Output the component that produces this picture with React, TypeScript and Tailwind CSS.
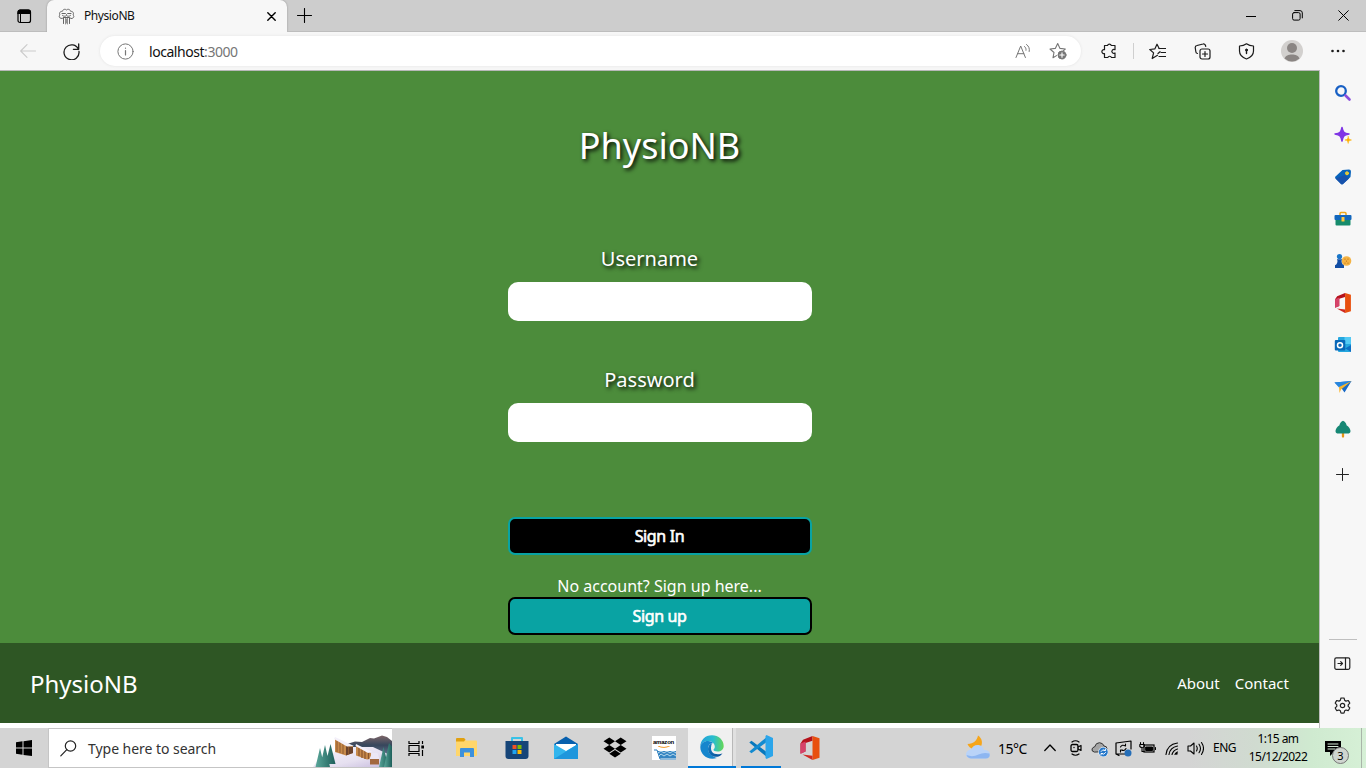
import React from "react";

type IconProps = { children: React.ReactNode; size?: number; className?: string; box?: string };

function Icon({ children, size = 16, className = "", box }: IconProps) {
  return (
    <svg
      width={size}
      height={size}
      viewBox={box ?? `0 0 ${size} ${size}`}
      fill="none"
      stroke="currentColor"
      strokeLinecap="round"
      strokeLinejoin="round"
      className={`shrink-0 ${className}`}
    >
      {children}
    </svg>
  );
}

function Cell({ className, children }: { className: string; children?: React.ReactNode }) {
  return <div className={`flex shrink-0 items-center justify-center ${className}`}>{children}</div>;
}

function TabStrip() {
  return (
    <div className="flex h-8 shrink-0 bg-[#cdcdcd]">
      <Cell className="w-[47px] border-b border-[#bdbdbd]">
        <Icon size={16} className="text-black">
          <rect x="2" y="2" width="12.5" height="12.5" rx="2" strokeWidth="1.2" />
          <path d="M2 4a2 2 0 0 1 2-2h8.500a2 2 0 0 1 2 2v1.500H2z" fill="currentColor" />
          <path d="M4.500 5.500v8.500" strokeWidth="1" />
        </Icon>
      </Cell>
      <div className="flex w-[240px] items-center rounded-t-[7px] bg-[#f7f7f7] pl-[11px] shadow-[0_0_2px_#8d8d8d]">
        <Icon size={17} className="text-[#666]">
          <path d="M4 10.500C1 10.500.5 8 2 7C.5 4.500 3 3 4.200 3.500C5 1 7.500.8 8.500 2C9.500.8 12 1 12.800 3.500C14 3 16.500 4.500 15 7C16.500 8 16 10.500 13 10.500L11.500 9.500h-6z" />
          <path d="M4 5.500h3.500l1 1l1-1H13M4.500 7.500c1 1 3 1 4 0c1 1 3 1 4 0M5.500 10v5.500M11.500 10v5.500" />
          <path d="M7.500 10v6M9.500 10v6M8.500 11v4" strokeWidth=".7" />
        </Icon>
        <span className="ml-[9px] w-[183px] text-[12px] tracking-[-0.42px] text-[#111]">PhysioNB</span>
        <Icon size={9} className="text-black">
          <path d="M.8.800l7.400 7.400M8.200.800L.8 8.200" strokeWidth="1.4" />
        </Icon>
      </div>
      <Cell className="w-[35px] border-b border-[#bdbdbd]">
        <Icon size={15} className="text-black">
          <path d="M7.500.500v14M.5 7.500h14" strokeWidth="1.1" />
        </Icon>
      </Cell>
      <div className="flex flex-1 justify-end border-b border-[#bdbdbd] text-black">
        <Cell className="w-[46px]">
          <Icon size={10}>
            <path d="M0 5.500h10" strokeLinecap="butt" />
          </Icon>
        </Cell>
        <Cell className="w-[46px]">
          <Icon size={11}>
            <rect x=".6" y="2.600" width="7.500" height="7.500" rx="1.500" />
            <path d="M2.800.600h5.200a2.300 2.300 0 0 1 2.300 2.300v5" />
          </Icon>
        </Cell>
        <Cell className="w-[46px]">
          <Icon size={11}>
            <path d="M.7.700l9.600 9.600M10.300.700L.7 10.300" />
          </Icon>
        </Cell>
      </div>
    </div>
  );
}

function Toolbar() {
  return (
    <div className="flex h-[38px] shrink-0 items-center bg-[#f7f7f7] text-[#1b1b1b]">
      <Cell className="w-14">
        <Icon size={16} className="text-[#cbcbcb]">
          <path d="M15.500 8H.8M7 1.700L.7 8L7 14.300" strokeWidth="1.1" />
        </Icon>
      </Cell>
      <Cell className="w-8 pr-px">
        <Icon size={17}>
          <path d="M15.500 6.500A7.500 7.500 0 1 0 16 8.500M15.700 1v5.300h-5.300" strokeWidth="1.3" />
        </Icon>
      </Cell>
      <div className="ml-3 flex h-[30px] w-[981px] items-center rounded-full bg-white shadow-[0_0_3px_#e2e2e2]">
        <Cell className="ml-4 w-5 pr-px">
          <Icon size={17} className="text-[#767676]">
            <circle cx="8.500" cy="8.500" r="7.600" />
            <path d="M8.500 7.500v4.500M8.500 5v.200" strokeWidth="1.2" />
          </Icon>
        </Cell>
        <span className="ml-[13px] flex-1 text-[14px] tracking-[-0.45px] text-[#111]">
          localhost<span className="text-[#767676]">:3000</span>
        </span>
        <Cell className="w-9 pl-px">
          <Icon size={16} className="text-[#767676]">
            <path d="M1 14.500L5.700 3l4.700 11.500M2.600 10.700h6.200M9.500 3.500c1.300 1 1.700 2.300 1.500 3.800M11.500 1.500c2.500 1.700 3.300 4.300 2.700 7" />
          </Icon>
        </Cell>
        <Cell className="mr-[5px] w-9">
          <Icon size={18} className="text-[#767676]">
            <path d="M7.500 13.600L4 15.700l1-5.200L1 7l5.300-.6L8.700 1.500L11 6.400l5.300.6l-1.800 1.600" strokeWidth="1.1" />
            <circle cx="13" cy="13" r="4" fill="#767676" strokeWidth="1" />
            <path d="M13 10.800v4.400M10.800 13h4.400" stroke="#fff" strokeWidth="1.100" />
          </Icon>
        </Cell>
      </div>
      <Cell className="ml-[10px] w-9">
        <Icon size={16}>
          <path d="M3.500 2.500h3a2 2 0 0 1 3.800 0h3.700v4.200a2 2 0 1 0 0 3.300v4.500h-3.500a2 2 0 0 0-3.700 0H3.500v-4a2 2 0 1 1 0-3.800z" strokeWidth="1.200" />
        </Icon>
      </Cell>
      <Cell className="w-3">
        <div className="h-4 w-px bg-[#cfcfcf]" />
      </Cell>
      <Cell className="w-[37px]">
        <Icon size={17}>
          <path d="M10 5.500h6.500M12 9.500h4.500M10 13.500h6.500" strokeWidth="1.200" />
          <path d="M8.500 12.300L3.200 15.500l1.400-5.600L.8 6.500l5-.6L8 1.200l2.200 4.300M11 8.700l-2 1.800" strokeWidth="1.200" />
        </Icon>
      </Cell>
      <Cell className="ml-1 w-11">
        <Icon size={17}>
          <rect x="6" y="6" width="10" height="10" rx="2" strokeWidth="1.200" />
          <path d="M11 8.500v5M8.500 11h5M3.500 10.500A2 2 0 0 1 1.800 8.500L1.200 4.500A2 2 0 0 1 3 2.500L9 1a2 2 0 0 1 2.500 1.500l.2 1" strokeWidth="1.200" />
        </Icon>
      </Cell>
      <Cell className="w-11">
        <Icon size={17}>
          <path d="M8.500.800C10.500 2.300 13 3 15.500 3v5c0 4-2.800 6.500-7 8c-4.200-1.500-7-4-7-8V3c2.500 0 5-.7 7-2.200z" strokeWidth="1.200" />
          <path d="M8.500 7v3.500" strokeWidth="1.400" />
          <circle cx="8.500" cy="7" r="1" fill="currentColor" />
        </Icon>
      </Cell>
      <Cell className="w-12">
        <Icon size={22}>
          <circle cx="11" cy="11" r="11" fill="#d2d0ce" stroke="none" />
          <circle cx="11" cy="8" r="5" fill="#8a8583" stroke="none" />
          <path d="M3.500 18.500c1.500-5.500 13.500-5.500 15 0a11 11 0 0 1-15 0z" fill="#8a8583" stroke="none" />
        </Icon>
      </Cell>
      <Cell className="w-11">
        <Icon size={14}>
          <g fill="currentColor" stroke="none">
            <circle cx="1.500" cy="7" r="1.300" />
            <circle cx="7" cy="7" r="1.300" />
            <circle cx="12.500" cy="7" r="1.300" />
          </g>
        </Icon>
      </Cell>
    </div>
  );
}

function OfficeMark({ size }: { size: number }) {
  return (
    <Icon size={size} box="0 0 20 24">
      <g stroke="none">
        <path d="M12.500 0L3 3.800L.5 7.500v10l5-2V7l7-2.300z" fill="#b5121b" />
        <path d="M.5 7.500l5-2V15.500l-5 2.500z" fill="#d6436a" />
        <path d="M12.500 0l7 2.200v19.600l-7 2.200z" fill="#e8500f" />
        <path d="M2.500 18.500l10 1.300V24z" fill="#cf2a22" />
      </g>
    </Icon>
  );
}

function Sidebar() {
  const tools = [
    <Icon size={18}>
      <circle cx="7" cy="7" r="4.800" stroke="#1860c4" strokeWidth="2.300" />
      <path d="M11.500 11.500l4 4" stroke="#8b4ddb" strokeWidth="2.600" />
    </Icon>,
    <Icon size={18}>
      <path d="M8 1.500c1 4.800 1.700 5.700 7 6.500c-5.300 1-6 1.700-7 7c-1-5.300-1.700-6-7-7c5.300-.8 6-1.700 7-6.500z" fill="#8133e8" stroke="#7f35e4" strokeWidth="1.500" />
      <path d="M14.200 10.500c.3 2.500.8 3 3.300 3.500c-2.500.5-3 .8-3.300 3.500c-.5-2.700-.8-3-3.300-3.500c2.500-.5 3-1 3.300-3.500z" fill="#ffb000" stroke="#ffb000" strokeWidth=".5" />
    </Icon>,
    <Icon size={18}>
      <path d="M1.500 8.500L8.500 2l6.500-.5q2 0 2 2L16.500 9L9 16q-1 .8-2 0L1.500 10.500q-1-1 0-2z" fill="#0863bb" stroke="none" />
      <path d="M1.500 10.500L11 7l4 3.500L9 16q-1 .8-2 0z" fill="#1752ac" stroke="none" />
      <circle cx="13" cy="5.300" r="1.500" fill="#c3cf50" stroke="#ffc928" />
    </Icon>,
    <Icon size={18}>
      <path d="M6 5V3.500q0-1 1-1h4q1 0 1 1V5" stroke="#efa91b" strokeWidth="1.500" />
      <rect x="1.500" y="8" width="15" height="7.500" rx="1" fill="#168b6c" stroke="none" />
      <rect x=".5" y="5" width="17" height="5" rx="1" fill="#1267bd" stroke="none" />
      <rect x="7.500" y="7" width="3" height="4.500" rx=".5" fill="#ffc83d" stroke="none" />
    </Icon>,
    <Icon size={18}>
      <circle cx="12.500" cy="9" r="4.800" fill="#f4b344" stroke="none" />
      <path d="M11 7v.1M14 7v.1M12.500 9v.1M11 11v.1M14 11v.1" stroke="#b86b14" strokeWidth="1.200" />
      <circle cx="5.500" cy="4.500" r="2.600" fill="#1976c9" stroke="none" />
      <path d="M3 7.200h5v1H7.500c0 2.500.5 4 2.500 5V16H1v-2.800c2-1 2.500-2.500 2.500-5H3z" fill="#124ea4" stroke="none" />
    </Icon>,
    <OfficeMark size={20} />,
    <Icon size={18}>
      <rect x="4" y="1" width="13" height="15" rx="1" fill="#25a7df" stroke="none" />
      <path d="M10.500 1H16q1 0 1 1v6h-6.500z" fill="#53caf5" stroke="none" />
      <path d="M6 9l11 7V9L11 12.500z" fill="#0c6fc4" stroke="none" />
      <rect x=".8" y="4" width="10.500" height="10.500" rx="1" fill="#0868b8" stroke="none" />
      <circle cx="6" cy="9.200" r="2.500" stroke="#fff" strokeWidth="1.500" />
    </Icon>,
    <Icon size={18}>
      <path d="M.5 4.500L17.500 3L10.500 14.500L8 11z" fill="#1769c7" stroke="none" />
      <path d="M.5 4.500L17.500 3L5 9.500z" fill="#2686df" stroke="none" />
      <path d="M5 9L17.500 3L7 11.500L5.500 15z" fill="#f9b52d" stroke="none" />
    </Icon>,
    <Icon size={18}>
      <path d="M9 12v4.500" stroke="#e89616" strokeWidth="2.300" />
      <path d="M9 .8C7 1.500 5.500 4 5.500 5.200C3 6.500 1.500 9.500 1.500 11c0 2 1.200 2.500 3 2.500h9c1.800 0 3-.5 3-2.500c0-1.500-1.500-4.500-4-5.800C12.500 4 11 1.500 9 .8z" fill="#168774" stroke="none" />
    </Icon>,
  ];
  return (
    <aside className="flex w-[47px] shrink-0 flex-col items-center border-l border-[#bdbdbd] bg-[#f7f7f7] text-[#222]">
      {tools.map((tool, i) => (
        <Cell key={i} className="h-[42px] w-full pr-px first:mt-0.5">
          {tool}
        </Cell>
      ))}
      <Cell className="mt-[3px] h-[42px] pr-px">
        <Icon size={13}>
          <path d="M6.500.500v12M.5 6.500h12" />
        </Icon>
      </Cell>
      <div className="mt-auto h-px w-7 bg-[#bfbfbf]" />
      <Cell className="mt-[2px] h-[42px] pr-px">
        <Icon size={17}>
          <rect x=".8" y="2.800" width="15" height="11.500" rx="1.500" strokeWidth="1.200" />
          <path d="M11.500 3v11M4 8.500h4.500M6.700 6.700l1.800 1.800l-1.800 1.800" strokeWidth="1.200" />
        </Icon>
      </Cell>
      <Cell className="mb-[2px] h-[42px] pr-px">
        <Icon size={17}>
          <circle cx="8.500" cy="8.500" r="2.200" strokeWidth="1.200" />
          <path d="M6.900 1.200q1.600-.4 3.200 0l.6 2.200l1.300.7l2.200-.6q1.100 1.200 1.600 2.700l-1.600 1.600v1.500l1.600 1.600q-.5 1.500-1.600 2.700l-2.200-.6l-1.300.7l-.6 2.200q-1.600.4-3.200 0l-.6-2.200l-1.300-.7l-2.200.6q-1.100-1.200-1.600-2.700l1.600-1.600V7.800L1.200 6.200q.5-1.500 1.600-2.700l2.200.6l1.300-.7z" strokeWidth="1.200" />
        </Icon>
      </Cell>
    </aside>
  );
}

function Field({ label, type }: { label: string; type: string }) {
  return (
    <label className="flex w-[304px] flex-col items-center">
      <span className="mr-5 text-[20px] leading-7 [text-shadow:2px_2px_4px_#000000]">{label}</span>
      <input type={type} className="mt-[9px] h-[39px] w-full rounded-[10px] bg-white px-3 text-base text-black outline-none" />
    </label>
  );
}

function LoginPage() {
  return (
    <main className="flex min-w-0 flex-1 flex-col bg-white text-white">
      <form className="flex h-[572px] shrink-0 flex-col items-center bg-[#4c8c3b]">
        <h1 className="mt-[50px] text-[36px] leading-[49px] [text-shadow:2px_2px_4px_#000000]">PhysioNB</h1>
        <div className="mt-[75px] flex flex-col gap-[45px]">
          <Field label="Username" type="text" />
          <Field label="Password" type="password" />
        </div>
        <button type="button" className="mt-[75px] h-[38px] w-[304px] rounded-[7px] border-2 border-[#09a3a3] bg-black text-[16px] leading-none tracking-[-0.35px] [-webkit-text-stroke:0.600px_white]">
          Sign In
        </button>
        <p className="mt-5 text-[16px] leading-[22px]">No account? Sign up here...</p>
        <button type="button" className="h-[38px] w-[304px] rounded-[7px] border-2 border-black bg-[#09a3a3] text-[16px] leading-none tracking-[-0.35px] [-webkit-text-stroke:0.600px_white]">
          Sign up
        </button>
      </form>
      <footer className="flex h-20 shrink-0 items-center justify-between bg-[#2e5624] px-[30px]">
        <span className="pt-[2px] text-[24px]">PhysioNB</span>
        <nav className="flex gap-[15px] text-[15px]">
          <a>About</a>
          <a>Contact</a>
        </nav>
      </footer>
    </main>
  );
}

function WinterScene() {
  return (
    <svg width="79" height="38" viewBox="0 0 79 38" className="shrink-0">
      <defs>
        <linearGradient id="snow" x1="0" y1="0" x2="1" y2="1">
          <stop offset="0" stopColor="#f6f4fb" />
          <stop offset=".6" stopColor="#e6e0f0" />
          <stop offset="1" stopColor="#c4b8dc" />
        </linearGradient>
        <linearGradient id="hill" x1="0" y1="0" x2="0" y2="1">
          <stop offset="0" stopColor="#7d6668" />
          <stop offset=".45" stopColor="#36465c" />
          <stop offset="1" stopColor="#6f7d99" />
        </linearGradient>
        <linearGradient id="pine" x1="0" y1="0" x2="1" y2="0">
          <stop offset="0" stopColor="#5aa79a" />
          <stop offset="1" stopColor="#1d5f5a" />
        </linearGradient>
      </defs>
      <path d="M34 15L42 12.500L49 13L57 9L61 9.500L69 6.500L74 8L79 12V28H34z" fill="url(#hill)" />
      <path d="M0 38L5 31L22 23L40 18L60 18L79 27V38z" fill="url(#snow)" />
      <path d="M22 10L40 17V24L33 26.500L22 23z" fill="#c78a4b" />
      <path d="M33 17L40 18V24L33 26.500z" fill="#6b422b" />
      <path d="M24 12v11M27 13v11M30 15v10M35.500 18v7" stroke="#8e5a30" strokeWidth="1" />
      <path d="M22 8L41 17L34 17.500L21 10z" fill="#f4f1fa" />
      <path d="M43 17L58 24V30L54 30.500L43 26.500z" fill="#c78a4b" />
      <path d="M46 18v9M49 20v9M52 21v9M55.500 23v7" stroke="#8a552d" strokeWidth="1.200" />
      <path d="M43 15L59 23L55 24L42.500 17z" fill="#f5f2fc" />
      <path d="M57 29h9v6.500h-9z" fill="#a2683e" />
      <path d="M56.500 30l2.500-6h5.500l2 6z" fill="#ece7f5" />
      <path d="M7 19L2.500 38h9zM12 16L7 38h10zM17.500 15L12.500 35h10z" fill="url(#pine)" />
      <path d="M70.500 18L66 38h9.500z" fill="url(#pine)" />
      <path d="M76 14L71 38h8V18z" fill="url(#pine)" />
    </svg>
  );
}

function TaskApps() {
  return (
    <>
      <Cell className="w-[51px]">
        <Icon size={24}>
          <path d="M1 4q0-2 2-2h6l2 2.500H21q1 0 1 1V19q0 1-1 1H1z" fill="#ffd66b" stroke="none" />
          <path d="M1 5V3Q1 2 2 2h7l1.500 1.500L9 5.500H1z" fill="#e0a010" stroke="none" />
          <path d="M5 21v-8q0-1 1-1h12q1 0 1 1v8h-4v-4.500H9V21z" fill="#3d91dc" stroke="none" />
        </Icon>
      </Cell>
      <Cell className="w-[49px]">
        <Icon size={24}>
          <path d="M7 6V2h10v4" stroke="#39c2e7" strokeWidth="2" />
          <path d="M.5 5h23v15q0 3-3 3h-17q-3 0-3-3z" fill="#164578" stroke="none" />
          <path d="M7.500 9h4v4h-4z" fill="#f05123" stroke="none" />
          <path d="M12.500 9h4v4h-4z" fill="#7fba00" stroke="none" />
          <path d="M7.500 14h4v4h-4z" fill="#20a4ef" stroke="none" />
          <path d="M12.500 14h4v4h-4z" fill="#ffb900" stroke="none" />
        </Icon>
      </Cell>
      <Cell className="w-[49px]">
        <Icon size={24}>
          <path d="M0 8L12 .5L24 8v3L12 15L0 11z" fill="#0760ae" stroke="none" />
          <path d="M2 8h20v4l-10 5L2 12z" fill="#fff" stroke="none" />
          <path d="M0 8l12 7L24 8v15H0z" fill="#32b5ed" stroke="none" />
          <path d="M0 23L24 8v15z" fill="#1e96dc" stroke="none" />
        </Icon>
      </Cell>
      <Cell className="w-[49px]">
        <Icon size={24}>
          <path d="M6.300 1.500l5.700 3.800l-5.700 3.700L.5 5.300zM17.700 1.500l5.800 3.800L17.700 9L12 5.300zM6.300 9l5.700 3.700l-5.700 3.800L.5 12.700zM17.700 9l5.800 3.700l-5.800 3.800l-5.700-3.800zM12 14l5.800 3.800L12 21.500l-5.700-3.700z" fill="#000" stroke="none" />
        </Icon>
      </Cell>
      <Cell className="w-[49px]">
        <div className="flex h-6 w-6 flex-col items-center bg-white pt-[3px]">
          <span className="font-['Liberation_Sans'] text-[6px] font-bold leading-[7px] tracking-[-0.200px] text-black">amazon</span>
          <svg width="24" height="14" viewBox="0 0 24 14" className="shrink-0" fill="none">
            <path d="M6 0q6 3 12-.3" stroke="#f49a26" />
            <path d="M2 4h3l3 9h16" stroke="#2478b8" />
            <path d="M5 5h19v7H8z" fill="#3585c2" />
            <path d="M6 7l3-2l3 2l3-2l3 2l3-2l3 2M7 10l2-2l3 2l3-2l3 2l3-2l3 2" stroke="#d7edf8" strokeWidth=".8" />
          </svg>
        </div>
      </Cell>
      <div className="flex h-full w-12 shrink-0 border-b-2 border-[#0078d7]">
        <Cell className="w-[45px] border-r border-[#b8b8b8] bg-[#f0f0f0] pl-[3px]">
          <Icon size={24}>
            <defs>
              <linearGradient id="edgeTop" x1="0" y1="0" x2="1" y2="0">
                <stop offset="0" stopColor="#249fd9" />
                <stop offset=".55" stopColor="#29bdd0" />
                <stop offset="1" stopColor="#66d855" />
              </linearGradient>
              <linearGradient id="edgeLow" x1="0" y1="0" x2="1" y2="1">
                <stop offset="0" stopColor="#1682c8" />
                <stop offset="1" stopColor="#074c94" />
              </linearGradient>
            </defs>
            <path d="M.3 12C.3 5 5.200.300 12 .300C18.500.300 23.700 5 23.700 11c0 3.500-2.700 5.500-6.200 5.500c-2.500 0-4-.8-4-1.700c0-.6 1.300-1.200 1.300-3C14.800 8.500 12 6 8.500 6C4 6 .9 8.500.3 12z" fill="url(#edgeTop)" stroke="none" />
            <path d="M.3 12C.8 8.500 4 6 8 6c2.500 0 4.500 1 5.500 2.300C10 7.800 8 10.500 8 14c0 5 5 7.500 9 9C8 26 .3 20 .3 12z" fill="#1686cd" stroke="none" />
            <path d="M12 8.200C9 9 8 11.500 8 14c0 5.500 5.500 8.800 10.500 7.500c1.800-.6 3-1.700 4-3.300c-3 1.500-8.500 1.500-10.500-1.500c-1.500-2.200-1.200-5.500 0-8.500z" fill="url(#edgeLow)" stroke="none" />
          </Icon>
        </Cell>
        <div className="flex-1 bg-[#e0e0e0]" />
      </div>
      <Cell className="ml-[5px] h-full w-10 border-b-2 border-[#0078d7]">
        <Icon size={24}>
          <path d="M.3 7.500L2.500 5.700L19 18v5z" fill="#0878bd" stroke="none" />
          <path d="M.3 16.500l2.200 1.800L19 6V1z" fill="#138bd0" stroke="none" />
          <path d="M17.500 0L24 3v18l-6.500 3l-1-1V1z" fill="#2ba5ea" stroke="none" />
        </Icon>
      </Cell>
      <Cell className="ml-[4px] w-[49px]">
        <OfficeMark size={24} />
      </Cell>
    </>
  );
}

function Tray() {
  return (
    <div className="ml-auto flex h-full items-center text-black">
      <Icon size={26}>
        <path d="M13 .5c-1 5-4 8-10.500 8.500c1 2.500 3 4.500 5.500 5l7-1c3.500-4.500 2-10-2-12.500z" fill="#f6a51a" stroke="none" />
        <path d="M5.500 23.500Q1 23 1 19q.5-4 5-4.200Q8 9.500 13.500 10q4.500.8 5.500 5q6 0 6 4.500q-.5 4-4.500 4z" fill="#b9d3f8" stroke="none" />
        <path d="M4 23q-2-1-2.500-3q6 2.500 12-.5q5-2.500 11-1q1 5-4 5H6z" fill="#8db6f1" stroke="none" />
      </Icon>
      <span className="ml-[7px] w-[37px] text-[14px] tracking-[-0.500px]">15°C</span>
      <Cell className="w-[29px]">
        <Icon size={12}>
          <path d="M.8 8.500L6 3l5.200 5.500" strokeWidth="1.300" />
        </Icon>
      </Cell>
      <Cell className="w-[23px]">
        <Icon size={16}>
          <rect x="3" y="4.500" width="7" height="7" rx="1.500" strokeWidth="1.300" />
          <path d="M10 7l3-1.500v5L10 9M4 2q3.500-2.500 7 0M4 14q3.500 2.500 7 0" strokeWidth="1.200" />
          <circle cx="6" cy="7.500" r=".7" fill="currentColor" stroke="none" />
        </Icon>
      </Cell>
      <Cell className="w-6">
        <Icon size={17}>
          <path d="M3 12q-2.500-.5-2-3q.8-2 2.500-2Q5 2.500 8.500 2.700Q12 3 13 6q3 0 3 3q0 2-1.500 2.500z" fill="#a5a5a5" stroke="#333" />
          <circle cx="12.300" cy="12" r="5" fill="#fff" stroke="none" />
          <circle cx="12.300" cy="12" r="4.500" fill="#2678ca" stroke="none" />
          <path d="M10 11.500q1.500-3 4.200-1.200M14.500 9v1.500H13M14.700 12.500q-1.500 3-4.200 1.200M10 15v-1.500h1.500" stroke="#fff" strokeWidth=".9" />
        </Icon>
      </Cell>
      <Cell className="w-6">
        <Icon size={17}>
          <path d="M10 14H1V3l15-2v8M1 14l3 1.500" strokeWidth="1.200" />
          <path d="M5.500 7q1.500-3 5-1V4M11 8.500q-1.500 3-4.500 1.500M5.500 12v-2h2" strokeWidth="1.100" />
          <circle cx="13" cy="13" r="3.500" fill="#256eb8" stroke="none" />
        </Icon>
      </Cell>
      <Cell className="w-[25px]">
        <Icon size={17}>
          <rect x="5" y="5" width="10" height="7" strokeWidth="1.200" strokeLinejoin="miter" />
          <path d="M7 7h6.500v3.500H7z" fill="currentColor" />
          <path d="M16.500 7.500v2M1.500 2.500v2M4.500 2.500v2M.8 4.500h4.500v2q-2 2.500-4.500 0zM3 8v3.500h2" strokeWidth="1.100" />
        </Icon>
      </Cell>
      <Cell className="w-[24px]">
        <Icon size={16}>
          <path d="M2 14.500Q3 4.500 13.500 3M5 14.500q1-7 8.500-8.500M8 14.500q1-4 5.500-5.500M11 14.500q.5-1.500 2.500-2.500" strokeWidth="1.150" />
          <circle cx="12.700" cy="13.800" r="1" fill="currentColor" stroke="none" />
        </Icon>
      </Cell>
      <Cell className="w-[23px]">
        <Icon size={17}>
          <path d="M1 6h2.500L7 3v11l-3.500-3H1zM9.500 6q1.500 2.500 0 5M12 4.200q3 4.300 0 8.500M14.500 2.500q4 6 0 12" strokeWidth="1.100" />
        </Icon>
      </Cell>
      <span className="ml-[6px] w-[35px] text-[12px] tracking-[-0.500px]">ENG</span>
      <div className="w-[60px] whitespace-nowrap text-center text-[12px] leading-[18px] tracking-[-0.540px]">
        <div>1:15 am</div>
        <div>15/12/2022</div>
      </div>
      <div className="relative ml-[17px] flex h-full w-[37px] items-center border-r border-[#a9b5a9]">
        <Icon size={17}>
          <path d="M0 1h16v11H9l-4 4v-4H0z" fill="#000" stroke="none" />
          <path d="M3 4h10M3 6.500h10M3 9h7" stroke="#d5ead6" />
        </Icon>
        <span className="absolute left-[7px] top-[19px] flex h-[17px] w-[17px] items-center justify-center rounded-full border border-[#777] bg-[#cfd5cf] text-[11px] leading-none">3</span>
      </div>
      <div className="w-1" />
    </div>
  );
}

function Taskbar() {
  return (
    <div className="flex h-10 shrink-0 items-center bg-[linear-gradient(90deg,#d4d4d4_0%,#d4d4d4_87%,#d0dbd0_92%,#cfead0_96%,#d6f0d6_100%)]">
      <Cell className="w-12">
        <Icon size={16}>
          <path d="M0 2.300L6.500 1.300v6.200H0zM7.500 1.200L16 0v7.500H7.500zM0 8.500h6.500v6.300L0 13.800zM7.500 8.500H16V16l-8.500-1.100z" fill="#000" stroke="none" />
        </Icon>
      </Cell>
      <div className="flex h-10 w-[344px] shrink-0 items-center border border-r-0 border-[#c5c5c5] bg-white pl-[11px]">
        <Icon size={17} className="text-[#222]">
          <circle cx="10.500" cy="6" r="5.200" strokeWidth="1.200" />
          <path d="M6.800 9.700L.8 15.800" strokeWidth="1.200" />
        </Icon>
        <span className="ml-[11px] flex-1 text-[14px] tracking-[-0.040px] text-[#333]">Type here to search</span>
        <WinterScene />
      </div>
      <Cell className="w-[49px] text-black">
        <Icon size={17}>
          <path d="M1 1v2.500h10V1M1 16v-2.500h10V16M1 5.500h10v6H1zM14.500 1v3M14.500 10v6" strokeWidth="1.200" strokeLinejoin="miter" strokeLinecap="butt" />
          <path d="M13.300 5.500h2.700v3h-2.700z" fill="currentColor" stroke="none" />
        </Icon>
      </Cell>
      <TaskApps />
      <Tray />
    </div>
  );
}

export default function App() {
  return (
    <div className="flex h-screen w-full flex-col overflow-hidden font-['Noto_Sans',sans-serif]">
      <TabStrip />
      <Toolbar />
      <div className="flex min-h-0 flex-1">
        <div className="flex min-w-0 flex-1 flex-col border-t border-[#b8b8b8]">
          <LoginPage />
        </div>
        <Sidebar />
      </div>
      <Taskbar />
    </div>
  );
}
